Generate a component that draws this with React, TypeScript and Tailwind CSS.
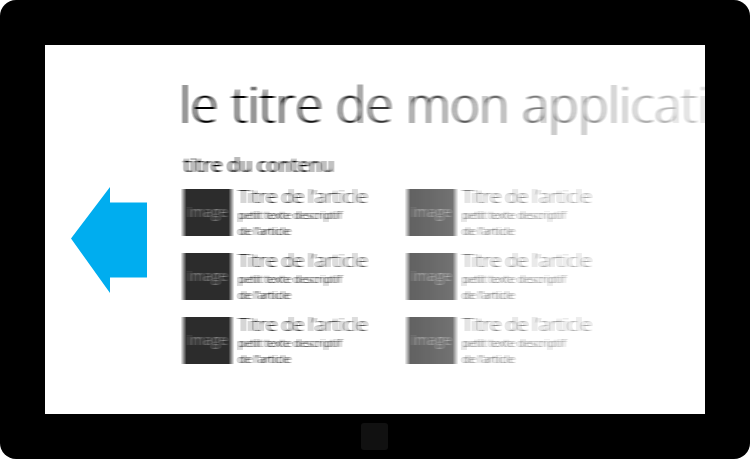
const columns = [0, 1];
const rows = [0, 1, 2];

function Article() {
  return (
    <article className="flex h-12 gap-[7px]">
      <div className="flex h-[47px] w-12 shrink-0 items-center justify-center bg-[#2c2c2c] pb-0.5 text-sm text-[#858585]">
        image
      </div>
      <div className="-mt-0.5 whitespace-nowrap">
        <h3 className="mb-0.5 text-[19px] leading-[18px] font-light">Titre de l’article</h3>
        <p className="text-[11px] leading-4">
          petit texte descriptif
          <br />
          de l’article
        </p>
      </div>
    </article>
  );
}

export default function App() {
  return (
    <div className="flex min-h-screen flex-col rounded-2xl bg-black px-[45px] pt-[45px] font-['Open_Sans','Noto_Sans',sans-serif] text-black">
      <svg className="absolute size-0" aria-hidden="true">
        <filter id="motion" x="-2%" width="104%" y="0%" height="100%" colorInterpolationFilters="sRGB">
          <feConvolveMatrix order="6 1" kernelMatrix="1 1 1 1 1 1" divisor="6" />
        </filter>
      </svg>

      <main className="flex flex-1 overflow-hidden bg-white">
        <div className="flex w-[134px] shrink-0 items-center pt-5 pl-[26px]">
          <svg width="76" height="106" viewBox="0 0 76 106" role="img" aria-label="Défiler vers la gauche">
            <path d="M0 51.500L39 0V15.500H76V90.500H39V106Z" fill="#00adef" />
          </svg>
        </div>

        <div className="min-w-0 flex-1 overflow-hidden [mask-image:linear-gradient(to_right,black_90px,transparent_647px)]">
          <div className="w-[640px] pt-[23px] [filter:url(#motion)]">
            <h1 className="text-[50px] leading-[72px] font-light whitespace-nowrap">
              le titre de mon application
            </h1>
            <h2 className="mt-[9px] pl-1 text-[20px] leading-8 font-normal">titre du contenu</h2>
            <div className="mt-2 flex pl-1">
              {columns.map((column) => (
                <section key={column} className="flex w-56 shrink-0 flex-col gap-4">
                  {rows.map((row) => (
                    <Article key={row} />
                  ))}
                </section>
              ))}
            </div>
          </div>
        </div>
      </main>

      <footer className="flex h-[45px] shrink-0 items-center justify-center pr-0.5">
        <button type="button" aria-label="Accueil" className="size-[27px] rounded-[3px] bg-[#111111]" />
      </footer>
    </div>
  );
}
